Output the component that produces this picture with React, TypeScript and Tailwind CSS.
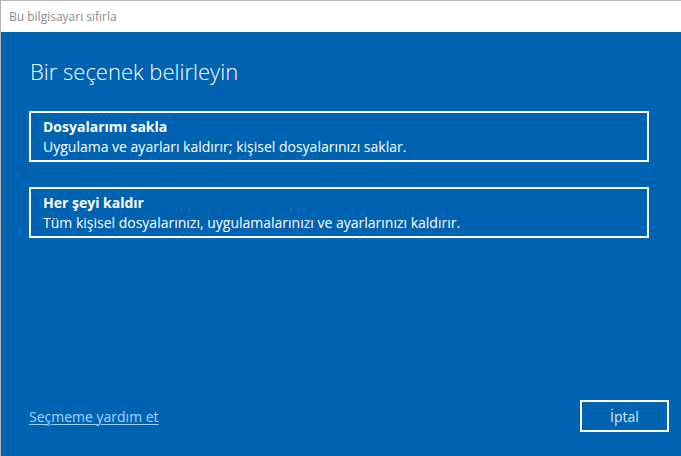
export default function App() {
  const options = [
    {
      title: 'Dosyalarımı sakla',
      desc: 'Uygulama ve ayarları kaldırır; kişisel dosyalarınızı saklar.',
    },
    {
      title: 'Her şeyi kaldır',
      desc: 'Tüm kişisel dosyalarınızı, uygulamalarınızı ve ayarlarınızı kaldırır.',
    },
  ];

  return (
    <div
      className="w-[681px] h-[456px] flex flex-col border-t border-l border-[#b4b4b4] overflow-hidden"
      style={{ fontFamily: '"Open Sans", "Noto Sans", sans-serif' }}
    >
      {/* Başlık çubuğu */}
      <div className="h-[31px] shrink-0 bg-white flex items-center pl-[8px] text-[12px] text-[#8a8a8a]">
        Bu bilgisayarı sıfırla
      </div>

      <div className="flex-1 bg-[#0063b1] flex flex-col pl-[28px] text-white">
        <h1 className="mt-[24px] text-[22px] font-light leading-[30px] pl-[1px]">Bir seçenek belirleyin</h1>

        <div className="mt-[25px] flex flex-col gap-[25px] w-[620px]">
          {options.map((o) => (
            <button
              key={o.title}
              className="h-[51px] border-2 border-white text-left pl-[12px] flex flex-col justify-center"
            >
              <span className="text-[14px] font-bold leading-[20px]">{o.title}</span>
              <span className="text-[14px] leading-[20px]">{o.desc}</span>
            </button>
          ))}
        </div>

        <div className="flex-1" />

        {/* Alt kısım */}
        <div className="flex items-center justify-between pr-[12px] mb-[24px]">
          <a className="text-[14px] text-[#a6d4ff] underline underline-offset-2 decoration-1 cursor-pointer">
            Seçmeme yardım et
          </a>
          <button className="w-[89px] h-[32px] border-2 border-white text-[14px] text-[#d6e8f7]">
            İptal
          </button>
        </div>
      </div>
    </div>
  );
}
